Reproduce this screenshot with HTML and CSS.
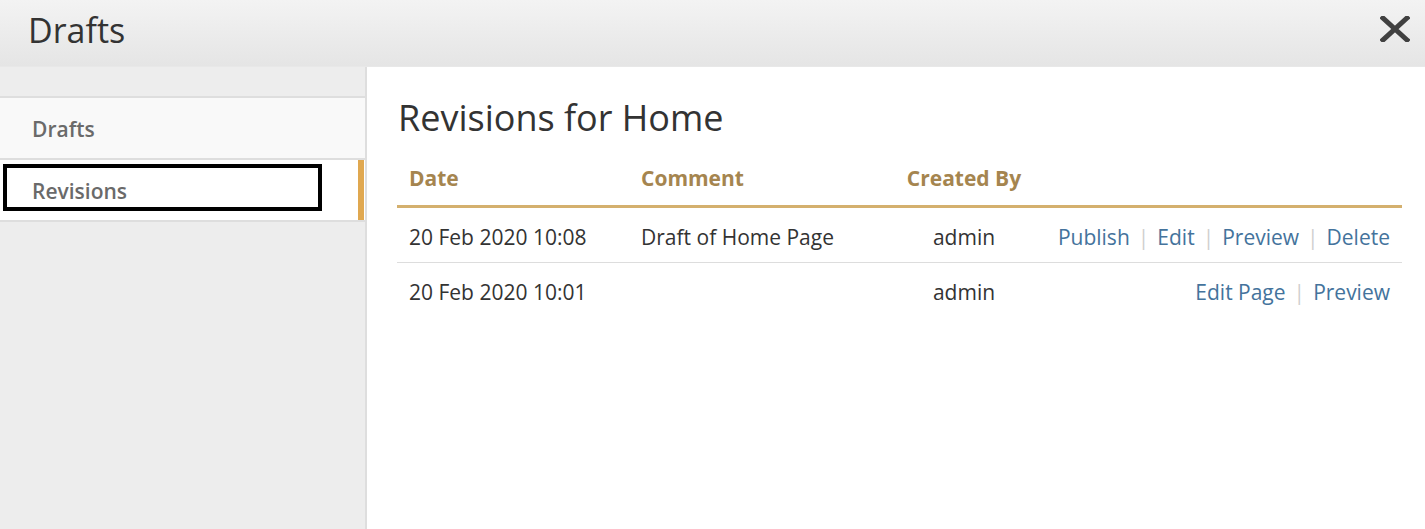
FILE: index.html
```html
<!DOCTYPE html>
<html lang="en">
<head>
  <meta charset="UTF-8">
  <title>Drafts</title>
  <link rel="stylesheet" href="styles.css">
</head>
<body>
  <!-- modal header -->
  <div class="modal-header">
    <h1>Drafts</h1>
    <span class="close-btn">
      <svg width="30" height="26" viewBox="0 0 30 26"><path d="M3 2 L27 24 M27 2 L3 24" stroke="#404040" stroke-width="5" stroke-linecap="square" fill="none"/></svg>
    </span>
  </div>

  <div class="modal-body">
    <!-- side menu -->
    <div class="sidebar">
      <ul class="side-nav">
        <li class="side-item">Drafts</li>
        <li class="side-item active">Revisions<span class="highlight-box"></span></li>
      </ul>
    </div>

    <!-- main panel -->
    <div class="main-panel">
      <h2>Revisions for Home</h2>
      <table class="revisions-table">
        <thead>
          <tr>
            <th class="col-date">Date</th>
            <th class="col-comment">Comment</th>
            <th class="col-user">Created By</th>
            <th class="col-actions"></th>
          </tr>
        </thead>
        <tbody>
          <tr>
            <td>20 Feb 2020 10:08</td>
            <td>Draft of Home Page</td>
            <td class="col-user">admin</td>
            <td class="col-actions">
              <a href="#">Publish</a><span class="sep">|</span><a href="#">Edit</a><span class="sep">|</span><a href="#">Preview</a><span class="sep">|</span><a href="#">Delete</a>
            </td>
          </tr>
          <tr>
            <td>20 Feb 2020 10:01</td>
            <td></td>
            <td class="col-user">admin</td>
            <td class="col-actions">
              <a href="#">Edit Page</a><span class="sep">|</span><a href="#">Preview</a>
            </td>
          </tr>
        </tbody>
      </table>
    </div>
  </div>
</body>
</html>
```

FILE: styles.css
```css
body {
  margin: 0;
  font-family: "Open Sans", "Liberation Sans", sans-serif;
  color: #333;
  background: #fff;
  height: 529px;
  display: flex;
  flex-direction: column;
  overflow: hidden;
}
.modal-header {
  height: 66px;
  flex-shrink: 0;
  background: linear-gradient(180deg, #f3f3f3, #e5e5e5);
  display: flex;
  justify-content: space-between;
  align-items: center;
  padding: 0 15px 0 28px;
}
.modal-header h1 {
  margin: 0;
  font-size: 34px;
  font-weight: 400;
  color: #333;
  position: relative;
  top: -3px;
}
.close-btn {
  display: flex;
  position: relative;
  top: -4px;
}
.modal-body {
  flex: 1;
  display: flex;
  border-top: 1px solid #e8e8e8;
}
.sidebar {
  width: 365px;
  flex-shrink: 0;
  background-color: #ededed;
  border-right: 2px solid #dedede;
  padding-top: 29px;
}
.side-nav {
  list-style: none;
  margin: 0;
  padding: 0;
  border-top: 2px solid #dedede;
}
.side-item {
  position: relative;
  height: 60px;
  line-height: 62px;
  padding-left: 32px;
  font-size: 21px;
  font-weight: 600;
  color: #6a6a6a;
  background-color: #f9f9f9;
  border-bottom: 2px solid #dedede;
}
.side-item.active {
  background-color: #fff;
}
.side-item.active::after {
  content: '';
  position: absolute;
  top: 0;
  right: 1px;
  width: 6px;
  height: 60px;
  background-color: #e0a850;
}
.highlight-box {
  position: absolute;
  left: 3px;
  top: 4px;
  width: 311px;
  height: 39px;
  border: 4px solid #000;
}
.main-panel {
  flex: 1;
  background: #fff;
  padding: 0 23px 0 30px;
}
.main-panel h2 {
  margin: 27px 0 0 1px;
  font-size: 36px;
  font-weight: 400;
  color: #333;
  line-height: 48px;
}
.revisions-table {
  width: 100%;
  border-collapse: collapse;
  margin-top: 10px;
  font-size: 21px;
}
.revisions-table th {
  text-align: left;
  color: #a5854f;
  font-weight: 700;
  padding: 7px 12px 9px;
  height: 37px;
  border-bottom: 3px solid #d4b06e;
}
.revisions-table td {
  padding: 3px 12px 0;
  height: 51px;
  border-bottom: 1px solid #ddd;
  color: #333;
}
.revisions-table tbody tr:last-child td {
  border-bottom: none;
}
.col-date {
  width: 208px;
}
.col-comment {
  width: 231px;
}
.revisions-table .col-user {
  width: 136px;
  text-align: center;
}
.revisions-table .col-actions {
  text-align: right;
}
.col-actions a {
  color: #44739c;
  text-decoration: none;
}
.sep {
  color: #cfcfcf;
  margin: 0 8px;
}
```
